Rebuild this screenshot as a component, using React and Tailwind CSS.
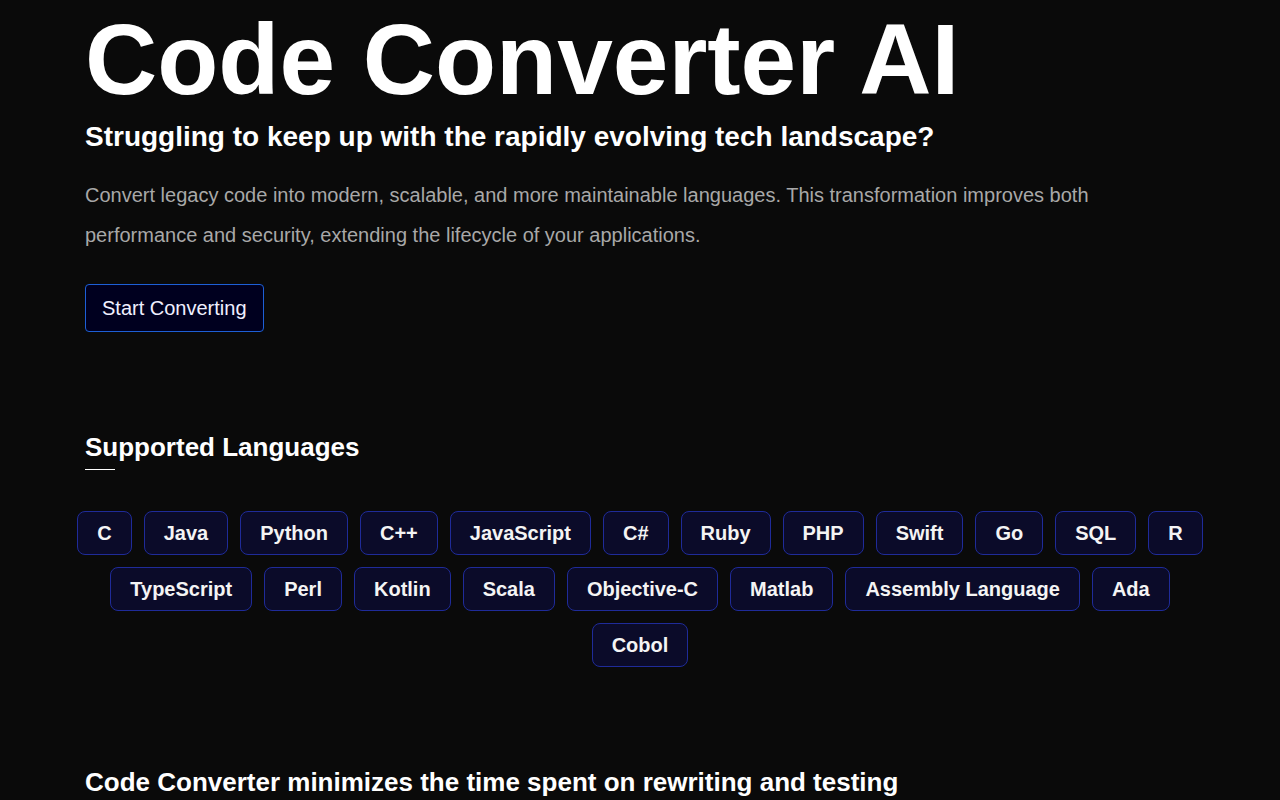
const languages = [
  'C', 'Java', 'Python', 'C++', 'JavaScript', 'C#', 'Ruby', 'PHP', 'Swift', 'Go', 'SQL', 'R',
  'TypeScript', 'Perl', 'Kotlin', 'Scala', 'Objective-C', 'Matlab', 'Assembly Language', 'Ada',
  'Cobol',
];

export default function App() {
  return (
    <div className="min-h-screen bg-[#0a0a0a] text-white font-['Liberation_Sans',Arial,sans-serif] overflow-hidden">
      {/* Hero */}
      <section className="px-[85px] pt-[9px]">
        <h1 className="text-[100px] leading-none font-bold tracking-normal">Code Converter AI</h1>
        <h2 className="mt-[11px] text-[28px] leading-[34px] font-bold">
          Struggling to keep up with the rapidly evolving tech landscape?
        </h2>
        <p className="mt-[21px] text-[20px] leading-[40px] text-[#a8a8a8] max-w-[1110px]">
          Convert legacy code into modern, scalable, and more maintainable languages. This transformation improves both
          performance and security, extending the lifecycle of your applications.
        </p>
        <button className="mt-[29px] h-[48px] px-4 text-[20px] text-[#f0f0ff] bg-[#00001f] border border-[#1d5fd6] rounded-[4px]">
          Start Converting
        </button>
      </section>

      {/* Supported languages */}
      <section className="mt-[99px]">
        <div className="px-[85px]">
          <h3 className="text-[26px] leading-[32px] font-bold">Supported Languages</h3>
          <div className="mt-[6px] w-[30px] h-px bg-white"></div>
        </div>
        <div className="mt-[41px] px-[64px] flex flex-wrap justify-center gap-3">
          {languages.map((lang) => (
            <span
              key={lang}
              className="h-[44px] px-[19px] flex items-center text-[20px] font-bold text-[#f4f4f4] bg-[#0b0b29] border border-[#1f2b99] rounded-lg"
            >
              {lang}
            </span>
          ))}
        </div>
      </section>

      <section className="px-[85px] mt-[99px]">
        <h3 className="text-[26px] leading-[32px] font-bold">
          Code Converter minimizes the time spent on rewriting and testing
        </h3>
      </section>
    </div>
  );
}
